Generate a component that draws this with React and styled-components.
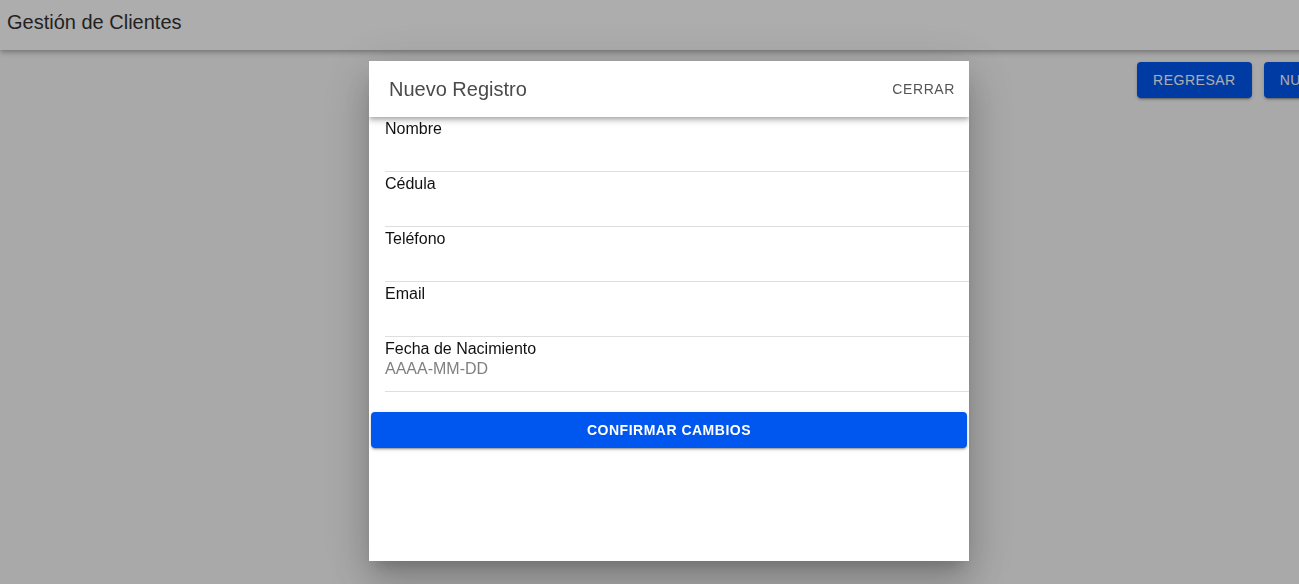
import styled, { createGlobalStyle } from "styled-components";

const GlobalStyle = createGlobalStyle`
  html, body {
    margin: 0;
    padding: 0;
    overflow: hidden;
    background: #fafafa;
    font-family: "Liberation Sans", Arial, sans-serif;
  }
  * { box-sizing: border-box; }
`;

const Page = styled.div`
  width: 1431px;
  height: 584px;
  background: #fafafa;
`;

const AppBar = styled.header`
  height: 50px;
  background: #fff;
  display: flex;
  align-items: center;
  padding: 0 0 5px 7px;
  box-shadow: 0 2px 4px -1px rgba(0, 0, 0, 0.2), 0 4px 5px 0 rgba(0, 0, 0, 0.14);
`;

const AppTitle = styled.h1`
  margin: 0;
  font-size: 20px;
  font-weight: 400;
  color: #333;
`;

const Actions = styled.div`
  display: flex;
  justify-content: flex-end;
  gap: 12px;
  padding: 12px 16px 0 0;
`;

const Button = styled.button`
  height: 36px;
  padding: 0 16px;
  border: none;
  border-radius: 4px;
  background: #0057f0;
  color: #fff;
  font-family: "Liberation Sans", Arial, sans-serif;
  font-size: 14px;
  letter-spacing: 0.5px;
  text-transform: uppercase;
  white-space: nowrap;
  cursor: pointer;
  box-shadow: 0 3px 1px -2px rgba(0, 0, 0, 0.2), 0 2px 2px 0 rgba(0, 0, 0, 0.14),
    0 1px 5px 0 rgba(0, 0, 0, 0.12);
  width: ${(p) => (p.$block ? "calc(100% - 4px)" : "auto")};
  margin: ${(p) => (p.$block ? "0 2px" : "0")};
  font-weight: ${(p) => (p.$block ? 600 : 400)};
`;

const Backdrop = styled.div`
  position: fixed;
  inset: 0;
  background: rgba(0, 0, 0, 0.32);
  display: flex;
  align-items: flex-start;
  padding: 61px 0 0 369px;
`;

const Dialog = styled.div`
  width: 600px;
  height: 500px;
  background: #fff;
  box-shadow: 0 11px 15px -7px rgba(0, 0, 0, 0.2), 0 24px 38px 3px rgba(0, 0, 0, 0.14),
    0 9px 46px 8px rgba(0, 0, 0, 0.12);
  display: flex;
  flex-direction: column;
  overflow: hidden;
`;

const DialogHeader = styled.div`
  height: 56px;
  flex: none;
  display: flex;
  align-items: center;
  justify-content: space-between;
  padding: 0 6px 0 20px;
  position: relative;
  z-index: 1;
  box-shadow: 0 2px 4px -1px rgba(0, 0, 0, 0.2), 0 4px 5px 0 rgba(0, 0, 0, 0.14),
    0 1px 10px 0 rgba(0, 0, 0, 0.12);
`;

const DialogTitle = styled.h2`
  margin: 0;
  font-size: 20px;
  font-weight: 400;
  color: #4a4a4a;
`;

const TextButton = styled.button`
  border: none;
  background: none;
  height: 36px;
  padding: 0 8px;
  font-family: "Liberation Sans", Arial, sans-serif;
  font-size: 14px;
  letter-spacing: 0.6px;
  color: #555;
  cursor: pointer;
`;

const Form = styled.form`
  display: flex;
  flex-direction: column;
  padding-left: 16px;
`;

const Field = styled.label`
  display: flex;
  flex-direction: column;
  padding: 2px 0 12px;
  border-bottom: 1px solid #dedede;
`;

const Label = styled.span`
  font-size: 16px;
  line-height: 20px;
  color: #111;
`;

const Input = styled.input`
  border: none;
  outline: none;
  padding: 0;
  height: 20px;
  font-family: "Liberation Sans", Arial, sans-serif;
  font-size: 16px;
  color: #111;
  background: transparent;
  &::placeholder {
    color: #808080;
  }
`;

const Footer = styled.div`
  padding-top: 20px;
`;

const fields = [
  { label: "Nombre" },
  { label: "Cédula" },
  { label: "Teléfono" },
  { label: "Email" },
  { label: "Fecha de Nacimiento", placeholder: "AAAA-MM-DD" },
];

export default function App() {
  return (
    <>
      <GlobalStyle />
      <Page>
        <AppBar>
          <AppTitle>Gestión de Clientes</AppTitle>
        </AppBar>
        <Actions>
          <Button>Regresar</Button>
          <Button>Nuevo Cliente</Button>
        </Actions>
      </Page>
      <Backdrop>
        <Dialog>
          <DialogHeader>
            <DialogTitle>Nuevo Registro</DialogTitle>
            <TextButton>CERRAR</TextButton>
          </DialogHeader>
          <Form onSubmit={(e) => e.preventDefault()}>
            {fields.map((f) => (
              <Field key={f.label}>
                <Label>{f.label}</Label>
                <Input placeholder={f.placeholder || ""} />
              </Field>
            ))}
          </Form>
          <Footer>
            <Button $block type="button">Confirmar Cambios</Button>
          </Footer>
        </Dialog>
      </Backdrop>
    </>
  );
}
